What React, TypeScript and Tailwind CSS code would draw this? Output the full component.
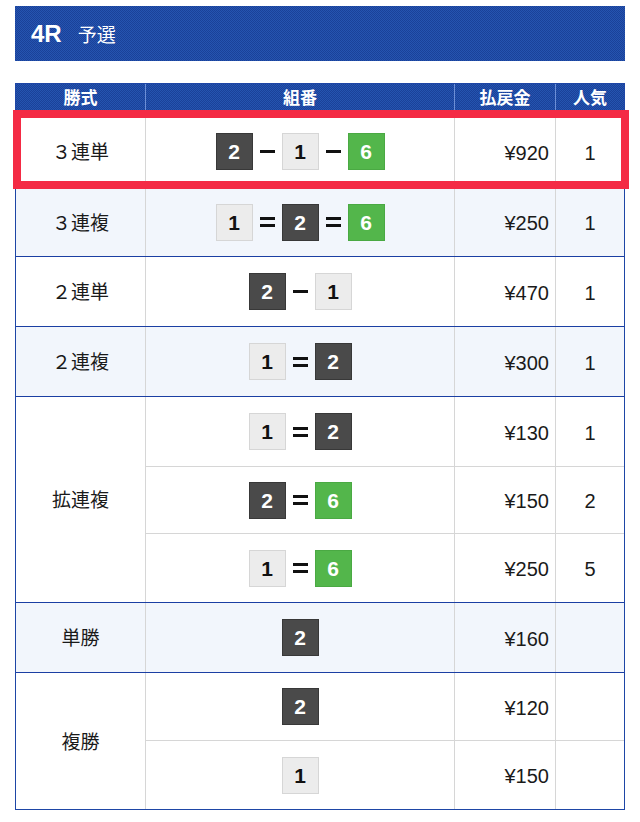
import React from "react";

type B = 1 | 2 | 6;
type Sub = { combo: B[]; sep: "-" | "=" | ""; price: string; pop: string; h: string };
type Group = { label: string; subs: Sub[]; bg: string; first?: boolean };

const groups: Group[] = [
  { label: "３連単", bg: "bg-white", first: true, subs: [{ combo: [2, 1, 6], sep: "-", price: "¥920", pop: "1", h: "h-[77px] pt-[6px]" }] },
  { label: "３連複", bg: "bg-[#f2f6fc]", subs: [{ combo: [1, 2, 6], sep: "=", price: "¥250", pop: "1", h: "h-[68px]" }] },
  { label: "２連単", bg: "bg-white", subs: [{ combo: [2, 1], sep: "-", price: "¥470", pop: "1", h: "h-[69px]" }] },
  { label: "２連複", bg: "bg-[#f2f6fc]", subs: [{ combo: [1, 2], sep: "=", price: "¥300", pop: "1", h: "h-[69px]" }] },
  {
    label: "拡連複",
    bg: "bg-white",
    subs: [
      { combo: [1, 2], sep: "=", price: "¥130", pop: "1", h: "h-[69px]" },
      { combo: [2, 6], sep: "=", price: "¥150", pop: "2", h: "h-[67px]" },
      { combo: [1, 6], sep: "=", price: "¥250", pop: "5", h: "h-[69px]" },
    ],
  },
  { label: "単勝", bg: "bg-[#f2f6fc]", subs: [{ combo: [2], sep: "", price: "¥160", pop: "", h: "h-[69px]" }] },
  {
    label: "複勝",
    bg: "bg-white",
    subs: [
      { combo: [2], sep: "", price: "¥120", pop: "", h: "h-[67px]" },
      { combo: [1], sep: "", price: "¥150", pop: "", h: "h-[69px]" },
    ],
  },
];

function Badge({ n }: { n: B }) {
  const cls =
    n === 2
      ? "bg-[#4a4a4a] border-[#383838] text-white"
      : n === 1
      ? "bg-[#ececec] border-[#d6d6d6] text-[#111]"
      : "bg-[#53b64b] border-[#4aa943] text-white";
  return (
    <div
      className={`w-[37px] h-[37px] border flex items-center justify-center font-bold text-[21px] leading-none ${cls}`}
      style={{ fontFamily: '"Liberation Sans", Arial, sans-serif' }}
    >
      {n}
    </div>
  );
}

function Sep({ kind }: { kind: "-" | "=" | "" }) {
  if (kind === "-") return <div className="mx-[7px] w-[15px] h-[3px] bg-[#111]" />;
  if (kind === "=")
    return (
      <div className="mx-[7px] w-[15px] flex flex-col gap-[4px]">
        <div className="h-[3px] bg-[#111]" />
        <div className="h-[3px] bg-[#111]" />
      </div>
    );
  return null;
}

export default function App() {
  const hdrBg =
    "bg-[#1f4aa5] bg-[repeating-conic-gradient(#1a4199_0%_25%,#2554b0_0%_50%)] bg-[length:2px_2px]";
  return (
    <div className="w-[640px] h-[822px] bg-white pt-[6px]" style={{ fontFamily: '"Noto Sans CJK JP", "Liberation Sans", sans-serif' }}>
      <div className={`mx-[15px] h-[55px] flex items-center pl-[16px] text-white ${hdrBg}`}>
        <span className="font-bold text-[24px] leading-none" style={{ fontFamily: '"Liberation Sans", Arial, sans-serif' }}>
          4R
        </span>
        <span className="ml-[16px] text-[19px] leading-none">予選</span>
      </div>

      <div className="relative mx-[15px] mt-[22px] border border-[#1e46a6] text-[#1a1a1a]">
        <div className={`flex h-[26px] text-white font-bold text-[17px] ${hdrBg}`}>
          <div className="w-[130px] border-r border-[#6c8ed6] flex items-center justify-center">勝式</div>
          <div className="w-[309px] border-r border-[#6c8ed6] flex items-center justify-center">組番</div>
          <div className="w-[101px] border-r border-[#6c8ed6] flex items-center justify-center">払戻金</div>
          <div className="flex-1 flex items-center justify-center">人気</div>
        </div>

        {groups.map((g, gi) => (
          <div key={gi} className={`flex ${g.bg} ${g.first ? "" : "border-t border-[#1b3fa3]"}`}>
            <div className={`w-[130px] border-r border-[#d6d6d6] flex items-center justify-center text-[19px] ${g.first ? "pt-[6px]" : ""}`}>
              {g.label}
            </div>
            <div className="flex-1 flex flex-col">
              {g.subs.map((s, si) => (
                <div key={si} className={`flex ${s.h} ${si > 0 ? "border-t border-[#d6d6d6]" : ""}`}>
                  <div className="w-[309px] border-r border-[#d6d6d6] flex items-center justify-center">
                    {s.combo.map((n, i) => (
                      <React.Fragment key={i}>
                        {i > 0 && <Sep kind={s.sep} />}
                        <Badge n={n} />
                      </React.Fragment>
                    ))}
                  </div>
                  <div
                    className="w-[101px] border-r border-[#d6d6d6] flex items-center justify-end pr-[6px] pt-[2px] text-[20px]"
                    style={{ fontFamily: '"Liberation Sans", Arial, sans-serif' }}
                  >
                    {s.price}
                  </div>
                  <div
                    className="flex-1 flex items-center justify-center pt-[2px] text-[20px]"
                    style={{ fontFamily: '"Liberation Sans", Arial, sans-serif' }}
                  >
                    {s.pop}
                  </div>
                </div>
              ))}
            </div>
          </div>
        ))}

        <div className="absolute left-[-3px] top-[26px] w-[616px] h-[79px] border-[8px] border-[#f42a44] pointer-events-none" />
      </div>
    </div>
  );
}
